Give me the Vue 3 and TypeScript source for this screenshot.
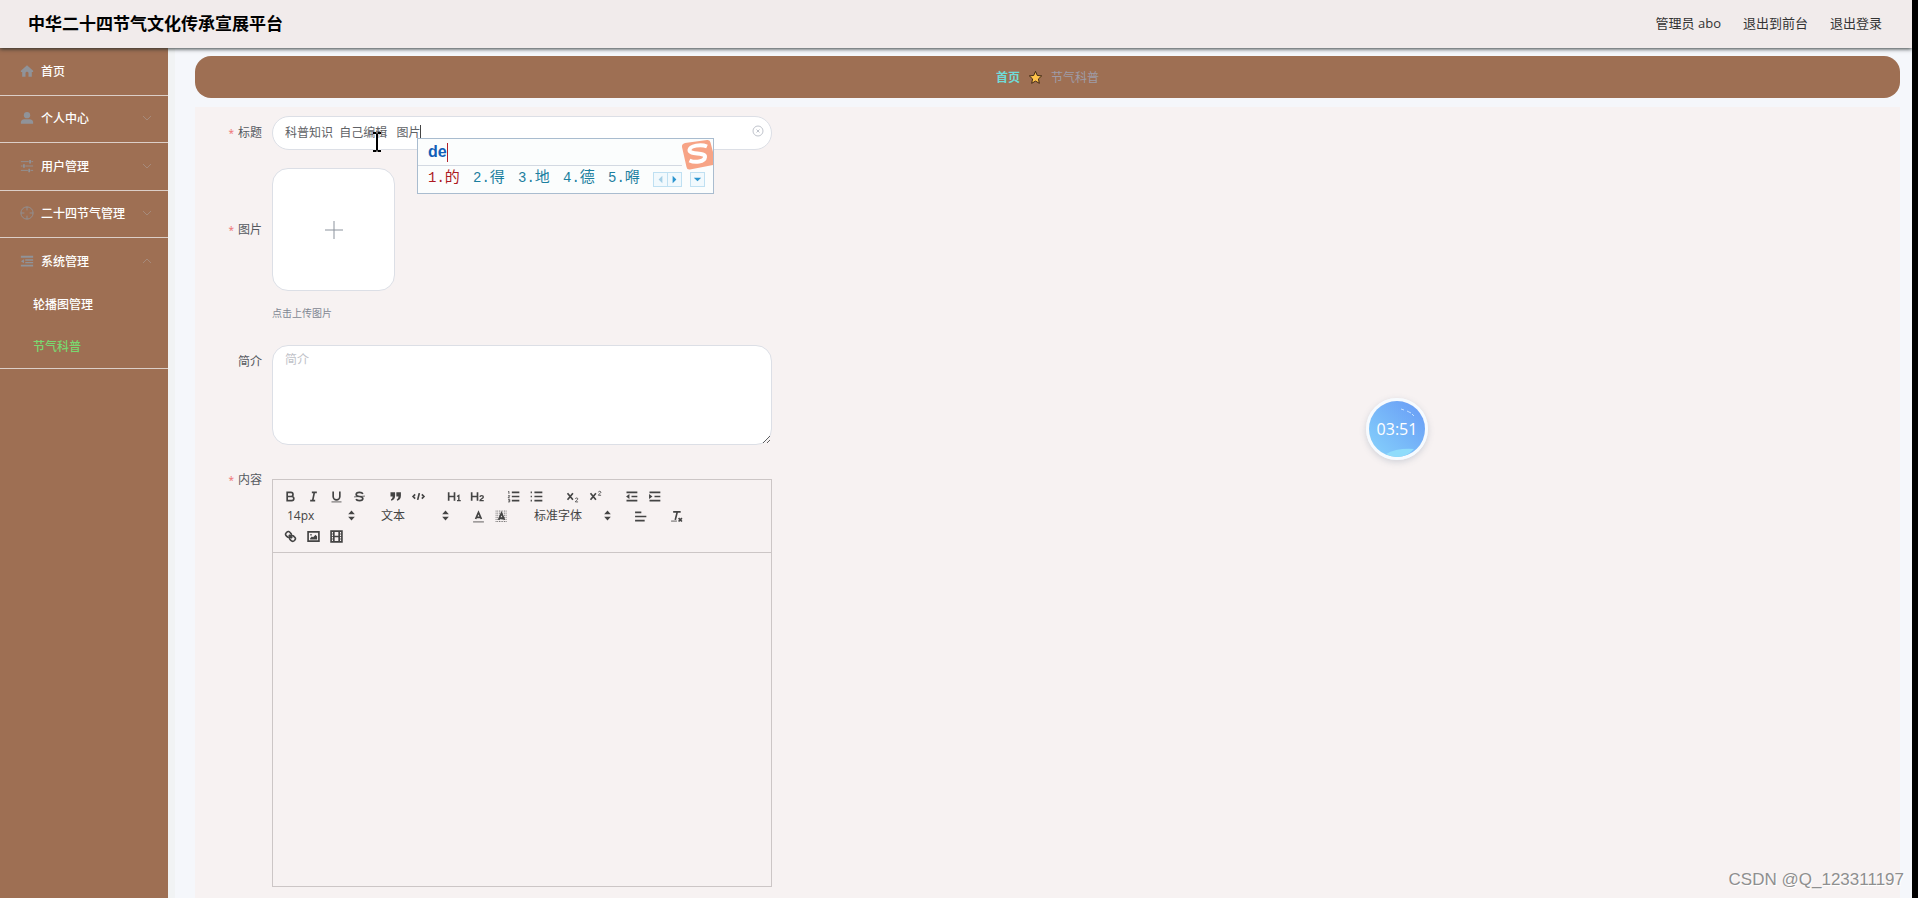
<script setup lang="ts">
import { ref } from 'vue'

interface MenuItem {
  label: string
  icon: string
  expandable: boolean
}

interface Tool {
  name: string
  art: string
}

const menu: MenuItem[] = [
  {
    label: '首页',
    icon: '<path class="solid" d="M8 1.500 1 7.600V9h1.500v5.500H6.300V10.500a1.700 1.700 0 0 1 3.400 0v4h3.800V9H15V7.600z"/>',
    expandable: false,
  },
  {
    label: '个人中心',
    icon: '<circle class="solid" cx="8" cy="4.800" r="3.600"/><path class="solid" d="M1 14.500v-1.800C1 10.600 3 9.400 5 9.400h6c2 0 4 1.200 4 3.300v1.800z"/>',
    expandable: true,
  },
  {
    label: '用户管理',
    icon: '<path class="line" d="M1 3h9M13 3h2M1 8h2M6 8h9M1 13h8M12 13h3"/><path class="line" d="M11.500 1v4M4.500 6v4M10.500 11v4" stroke-width="2"/>',
    expandable: true,
  },
  {
    label: '二十四节气管理',
    icon: '<circle class="line" cx="8" cy="8" r="7"/><path class="line" d="M8 1v4M8 11v4M1 8h4M11 8h4"/>',
    expandable: true,
  },
]

const systemIcon =
  '<path class="solid" d="M1 2h14v2.200H1zM6 6h9v1.700H6zM6 9h9v1.700H6zM1 12.200h14v2H1zM1 8.300 4.500 6v4.700z"/>'

const row1: Tool[][] = [
  [
    { name: '粗体', art: '<path class="s" d="M5 4h4.500a2.500 2.500 0 0 1 0 5H5zM5 9h5.500a2.500 2.500 0 0 1 0 5H5z"/>' },
    { name: '斜体', art: '<path class="s" d="M7 4h6M5 14h6M8 14l2-10"/>' },
    { name: '下划线', art: '<path class="s" d="M5 3v6a4 4 0 0 0 8 0V3"/><path class="t" d="M3 15.500h12"/>' },
    {
      name: '删除线',
      art: '<path class="s" d="M13 6c-.400-1.200-2-2-4-2-2.300 0-4 1-4 2.500S6.500 8.700 9 9s4 .900 4 2.500S11.300 14 9 14c-2 0-3.600-.800-4-2"/><path class="t" d="M15.500 8.500l-13 1"/>',
    },
  ],
  [
    {
      name: '引用',
      art: '<path class="f" d="M3 4h5.500v4c0 3-1.500 5.200-4.500 6l-.500-1.500C4.800 11.800 5.500 10.500 5.600 9H3zM10 4h5.500v4c0 3-1.500 5.200-4.500 6l-.500-1.500c1.300-.700 2-2 2.100-3.500H10z"/>',
    },
    { name: '代码', art: '<path class="s" d="M5 6.500 2.500 9 5 11.500M13 6.500 15.500 9 13 11.500M10 5 8 13"/>' },
  ],
  [
    { name: '一级标题', art: '<path class="s" d="M2 4v10M9 4v10M2 9h7"/><path class="m" d="M12 9l2.200-1.300V14M12 14h4.500"/>' },
    { name: '二级标题', art: '<path class="s" d="M2 4v10M9 4v10M2 9h7"/><path class="m" d="M12 9.500c0-2.200 4-2.200 4 0 0 1.700-4 2.800-4 4.500h4.500"/>' },
  ],
  [
    {
      name: '有序列表',
      art: '<path class="s" d="M7 4h9M7 9h9M7 14h9"/><path class="t" d="M2.500 3.500l1-.700v3M2.500 8h2l-2 2.500h2M2.500 12.500h2v3h-2M3 14h1.500"/>',
    },
    { name: '无序列表', art: '<path class="s" d="M6.500 4H16M6.500 9H16M6.500 14H16M2 4h1.500M2 9h1.500M2 14h1.500"/>' },
  ],
  [
    { name: '下标', art: '<path class="s" d="M3 5l6.500 8M9.500 5 3 13"/><path class="t" d="M12.500 12c0-1.700 3-1.700 3 0 0 1-3 2-3 3.500h3.200"/>' },
    { name: '上标', art: '<path class="s" d="M3 5l6.500 8M9.500 5 3 13"/><path class="t" d="M12.500 4c0-1.700 3-1.700 3 0 0 1-3 2-3 3.500h3.200"/>' },
  ],
  [
    { name: '减少缩进', art: '<path class="s" d="M3 4h13M9 9h7M3 14h13"/><path class="f" d="M6.500 6v6L2.500 9z"/>' },
    { name: '增加缩进', art: '<path class="s" d="M3 4h13M9 9h7M3 14h13"/><path class="f" d="M2.500 6v6l4-3z"/>' },
  ],
]

const colorTools: Tool[] = [
  { name: '文字颜色', art: '<path class="s" d="M5.500 12 9 4l3.500 8M6.500 10h5"/><path class="t" d="M2.500 15.500h13"/>' },
  {
    name: '背景颜色',
    art: '<path class="dots" d="M2 2.500h14M2 5h14M2 7.500h14M2 10h14M2 12.500h14M2 15h14"/><path class="s" d="M5.500 13 9 5l3.500 8M6.500 11h5"/>',
  },
]

const alignTool: Tool = { name: '对齐方式', art: '<path class="s" d="M2.500 4H10M2.500 9H16M2.500 14H14"/>' }
const cleanTool: Tool = {
  name: '清除格式',
  art: '<path class="s" d="M5 3.500h9M7.500 13l2.300-9M11.500 11l4 4M15.500 11l-4 4"/><path class="t" d="M2.500 14.500h7"/>',
}

const row3: Tool[] = [
  {
    name: '链接',
    art: '<path class="s" d="M7 7l4 4M8.900 4.600a3.500 3.500 0 0 1 .400 4.700 3.500 3.500 0 0 1-4.700-.400C3.200 7.500 2 6.400 4.200 4.200s3.300-1 4.700.400zM13.400 9.100a3.500 3.500 0 0 0-4.700-.400 3.500 3.500 0 0 0 .400 4.700c1.400 1.400 2.500 2.500 4.700.400s1-3.300-.400-4.700z"/>',
  },
  {
    name: '图片',
    art: '<path class="s" d="M2.500 3.500h13v11h-13z"/><circle class="f" cx="6" cy="7" r="1"/><path class="f" d="M5 12.500v-1.500l2-2 1.500 1L11.500 7l1.800 2v3.500z"/>',
  },
  {
    name: '视频',
    art: '<path class="s" d="M2.500 2.500h13v13h-13zM5.800 3v12M12.200 3v12M6 9h6"/><path class="t" d="M3 6h2.500M3 9h2.500M3 12h2.500M12.500 6H15M12.500 9H15M12.500 12H15"/>',
  },
]

const title = ref('科普知识  自己编辑   图片')
const intro = ref('')
const size = ref('14px')
const block = ref('文本')
const font = ref('标准字体')
const candidates = ['的', '得', '地', '德', '嘚']
</script>

<template>
  <div class="page">
    <header class="topbar">
      <h1>中华二十四节气文化传承宣展平台</h1>
      <nav class="account">
        <span>管理员 abo</span>
        <a href="#">退出到前台</a>
        <a href="#">退出登录</a>
      </nav>
    </header>

    <div class="body">
      <aside class="sidebar">
        <ul class="menu">
          <li v-for="item in menu" :key="item.label">
            <a href="#" class="entry">
              <svg class="menu-icon" viewBox="0 0 16 16" v-html="item.icon"></svg>
              <span>{{ item.label }}</span>
              <svg v-if="item.expandable" class="chevron" viewBox="0 0 10 10"><path d="M1 3l4 4 4-4" /></svg>
            </a>
          </li>
        </ul>
        <div class="system">
          <a href="#" class="entry">
            <svg class="menu-icon" viewBox="0 0 16 16" v-html="systemIcon"></svg>
            <span>系统管理</span>
            <svg class="chevron" viewBox="0 0 10 10"><path d="M1 7l4-4 4 4" /></svg>
          </a>
          <a href="#" class="sub">轮播图管理</a>
          <a href="#" class="sub active">节气科普</a>
        </div>
      </aside>

      <main class="content">
        <nav class="crumbs">
          <a href="#">首页</a>
          <svg class="star" viewBox="0 0 16 16">
            <path d="M8 1.500l1.900 4.300 4.700.500-3.500 3.200 1 4.700L8 11.800l-4.100 2.400 1-4.700L1.400 6.300l4.700-.500z" />
          </svg>
          <span>节气科普</span>
        </nav>

        <form class="panel" @submit.prevent>
          <div class="row">
            <label class="label required" for="title">标题</label>
            <div class="field">
              <input id="title" v-model="title" class="text" type="text" />
              <button class="clear" type="button" aria-label="清空">
                <svg viewBox="0 0 12 12"><circle cx="6" cy="6" r="5" /><path d="M4.500 4.500l3 3M7.500 4.500l-3 3" /></svg>
              </button>
              <i class="caret"></i>
              <div class="ime">
                <div class="ime-top"><b>de</b><i></i></div>
                <div class="ime-list">
                  <span v-for="(c, i) in candidates" :key="c" :class="{ first: i === 0 }"><small>{{ i + 1 }}.</small>{{ c }}</span>
                  <div class="pager">
                    <button type="button" aria-label="上一页"><svg viewBox="0 0 14 14"><path class="dim" d="M9 3v8L5 7z" /></svg></button>
                    <button type="button" aria-label="下一页"><svg viewBox="0 0 14 14"><path d="M5 3v8l4-4z" /></svg></button>
                  </div>
                  <button class="more" type="button" aria-label="更多"><svg viewBox="0 0 14 14"><path d="M3 5h8L7 9z" /></svg></button>
                </div>
                <svg class="sogou" viewBox="0 0 32 32">
                  <path class="tile" d="M4 4 26 1q3-.500 3.500 2.500L32 13v13l-23 4.500q-3 .500-3.500-2.500L1 8q-.500-3 3-4z" />
                  <path class="curve" d="M26 7.500C20 5 9 6.500 8.500 11c-.500 5 16 2 15.500 7-.500 5-10 6-15.500 3.500" />
                </svg>
              </div>
              <svg class="ibeam" viewBox="0 0 10 20"><path class="halo" d="M1 1h3.500M5.500 1H9M5 1.500v17M1 19h3.500M5.500 19H9" /><path d="M1 1h3.500M5.500 1H9M5 1.500v17M1 19h3.500M5.500 19H9" /></svg>
            </div>
          </div>

          <div class="row">
            <label class="label tall required" for="upload">图片</label>
            <div class="field">
              <button id="upload" class="upload" type="button" aria-label="上传图片">
                <svg viewBox="0 0 20 20"><path d="M10 1v18M1 10h18" /></svg>
              </button>
              <p class="tip">点击上传图片</p>
            </div>
          </div>

          <div class="row">
            <label class="label" for="intro">简介</label>
            <div class="field"><textarea id="intro" v-model="intro" placeholder="简介"></textarea></div>
          </div>

          <div class="row">
            <span id="body-label" class="label required">内容</span>
            <div class="field editor">
              <div class="toolbar">
                <div class="tools">
                  <div v-for="(group, g) in row1" :key="g" class="group">
                    <button v-for="t in group" :key="t.name" type="button" :aria-label="t.name"><svg viewBox="0 0 18 18" v-html="t.art"></svg></button>
                  </div>
                </div>
                <div class="tools">
                  <div class="picker">
                    <select v-model="size" aria-label="字号"><option>14px</option></select>
                    <svg viewBox="0 0 18 18"><path d="M5 10.500h8L9 15zM5 7.500h8L9 3z" /></svg>
                  </div>
                  <div class="picker">
                    <select v-model="block" aria-label="段落"><option>文本</option></select>
                    <svg viewBox="0 0 18 18"><path d="M5 10.500h8L9 15zM5 7.500h8L9 3z" /></svg>
                  </div>
                  <div class="group">
                    <button v-for="t in colorTools" :key="t.name" type="button" :aria-label="t.name"><svg viewBox="0 0 18 18" v-html="t.art"></svg></button>
                  </div>
                  <div class="picker wide">
                    <select v-model="font" aria-label="字体"><option>标准字体</option></select>
                    <svg viewBox="0 0 18 18"><path d="M5 10.500h8L9 15zM5 7.500h8L9 3z" /></svg>
                  </div>
                  <button type="button" :aria-label="alignTool.name"><svg viewBox="0 0 18 18" v-html="alignTool.art"></svg></button>
                  <button type="button" :aria-label="cleanTool.name"><svg viewBox="0 0 18 18" v-html="cleanTool.art"></svg></button>
                </div>
                <div class="tools">
                  <div class="group">
                    <button v-for="t in row3" :key="t.name" type="button" :aria-label="t.name"><svg viewBox="0 0 18 18" v-html="t.art"></svg></button>
                  </div>
                </div>
              </div>
              <div class="canvas" contenteditable="true" role="textbox" aria-labelledby="body-label"></div>
            </div>
          </div>
        </form>
      </main>
    </div>

    <div class="timer">
      <svg viewBox="0 0 56 56">
        <defs>
          <linearGradient id="sky" x1="0.1" y1="0.9" x2="0.9" y2="0.1">
            <stop offset="0" stop-color="#83cdfb" />
            <stop offset="1" stop-color="#6a9ff6" />
          </linearGradient>
        </defs>
        <circle cx="28" cy="28" r="28" fill="url(#sky)" />
        <path d="M17 53q10-6 28-5-7 8-17 8-6 0-11-3z" fill="#8fdcfb" />
        <path d="M32 8l3 1M38 10l4 2M43 13l2 2" stroke="#c3e0ff" fill="none" />
      </svg>
      <span>03:51</span>
    </div>
    <div class="mark">CSDN @Q_123311197</div>
  </div>
</template>

<style>
body {
  margin: 0;
  overflow: hidden;
}
</style>

<style scoped>
.page {
  position: relative;
  box-sizing: border-box;
  display: flex;
  flex-direction: column;
  height: 100vh;
  overflow: hidden;
  border-right: 6px solid #000;
  background: #f5f7fb;
  color: #555960;
  font: 12px "Open Sans", "Noto Sans CJK SC", sans-serif;
}

.page * {
  box-sizing: border-box;
}

a {
  color: inherit;
  text-decoration: none;
}

button {
  padding: 0;
  border: 0;
  background: none;
  color: inherit;
  cursor: pointer;
}

svg {
  display: block;
}

.topbar {
  position: relative;
  z-index: 1;
  display: flex;
  flex: none;
  align-items: center;
  justify-content: space-between;
  height: 48px;
  padding: 0 30px 0 28px;
  background: #f1ebeb;
  box-shadow: 0 1px 4px rgba(30, 40, 40, 0.9);
}

h1 {
  margin: 0;
  color: #000;
  font-size: 17px;
  line-height: 24px;
}

.account {
  display: flex;
  gap: 22px;
  padding-bottom: 2px;
  color: #333;
  font-size: 13px;
  line-height: 24px;
}

.body {
  display: flex;
  flex: 1;
  min-height: 0;
}

.sidebar {
  flex: none;
  width: 168px;
  background: #9e6f53;
  color: #fff;
  font-weight: 500;
}

.menu {
  display: grid;
  grid-template-rows: repeat(4, 1fr);
  height: 190px;
  margin: 0;
  padding: 0;
  list-style: none;
}

.menu li,
.system {
  border-bottom: 1px solid #dccfc8;
}

.entry {
  display: flex;
  align-items: center;
  gap: 7px;
  height: 46px;
  padding: 0 16px 0 20px;
}

.menu .entry {
  height: 45px;
}

.menu-icon {
  width: 14px;
  height: 14px;
}

.menu-icon :deep(.solid) {
  fill: #909399;
}

.menu-icon :deep(.line) {
  fill: none;
  stroke: #909399;
}

.chevron {
  width: 10px;
  height: 10px;
  margin-left: auto;
}

.chevron path {
  fill: none;
  stroke: #a68a7b;
}

.sub {
  display: block;
  padding-left: 33px;
  line-height: 42px;
}

.active {
  color: #79d970;
}

.content {
  display: flex;
  flex: 1;
  flex-direction: column;
  gap: 9px;
  min-width: 0;
  padding: 8px 12px 0 20px;
  border-left: 7px solid #f1f3f4;
}

.crumbs {
  display: flex;
  flex: none;
  align-items: center;
  justify-content: center;
  gap: 8px;
  height: 42px;
  border-radius: 16px;
  background: #9e6f53;
  color: #9f9ca6;
}

.crumbs a {
  color: #70dcd8;
  font-weight: 700;
}

.star {
  width: 15px;
  height: 15px;
}

.star path {
  fill: #ffc34a;
  stroke: #3a2413;
}

.panel {
  display: flex;
  flex: 1;
  flex-direction: column;
  gap: 18px;
  min-height: 0;
  padding-top: 9px;
  background: #f7f2f2;
}

.row {
  display: flex;
}

.label {
  flex: none;
  width: 77px;
  padding-right: 10px;
  line-height: 33px;
  text-align: right;
}

.tall {
  line-height: 123px;
}

.required::before {
  margin-right: 4px;
  color: #ee6e6e;
  font-size: 10px;
  content: "*";
}

.field {
  position: relative;
  width: 500px;
}

.text,
textarea {
  display: block;
  width: 100%;
  border: 1px solid #dcdfe6;
  outline: 0;
  background: #fff;
  color: #606266;
  font: inherit;
}

.text {
  height: 34px;
  padding: 0 30px 2px 12px;
  border-radius: 17px;
}

textarea {
  height: 100px;
  padding: 5px 12px;
  border-radius: 16px;
  line-height: 18px;
  resize: both;
}

textarea::placeholder {
  color: #bfc2c8;
}

.clear {
  position: absolute;
  top: 9px;
  right: 8px;
}

.clear svg {
  width: 12px;
  height: 12px;
  fill: none;
  stroke: #c0c4cc;
}

.caret {
  position: absolute;
  top: 9px;
  left: 148px;
  width: 1px;
  height: 14px;
  background: #444;
}

.ibeam {
  position: absolute;
  top: 16px;
  left: 100px;
  width: 10px;
  height: 20px;
  fill: none;
  stroke: #000;
  stroke-width: 2;
}

.ibeam .halo {
  stroke: #fff;
  stroke-width: 3;
}

.ime {
  position: absolute;
  z-index: 2;
  top: 22px;
  left: 145px;
  width: 297px;
  height: 56px;
  border: 1px solid #a9bccf;
  background: #fbfdfd;
}

.ime-top {
  display: flex;
  align-items: center;
  height: 27px;
  margin-right: 31px;
  padding-left: 10px;
  border-bottom: 1px solid #d3d9e2;
  color: #125fb8;
  font: 16px "Liberation Sans", sans-serif;
}

.ime-top i {
  width: 1px;
  height: 19px;
  background: #b3202a;
}

.ime-list {
  display: flex;
  align-items: center;
  height: 27px;
  padding-left: 10px;
  color: #1b7f9f;
  font: 15px/24px "Liberation Mono", "Noto Sans CJK SC", monospace;
}

.ime-list span {
  width: 45px;
  padding-bottom: 2px;
  white-space: nowrap;
}

.ime-list .first {
  color: #ad1a22;
}

small {
  font-size: 14px;
}

.pager {
  display: flex;
  margin-right: 8px;
}

.pager button,
.more {
  width: 15px;
  height: 15px;
  border: 1px solid #bfe0f2;
  background: #f1f9fd;
}

.pager button + button {
  margin-left: -1px;
}

.pager svg,
.more svg {
  width: 13px;
  height: 13px;
  fill: #2b95cf;
}

.pager .dim {
  fill: #a4cfe6;
}

.sogou {
  position: absolute;
  top: 0;
  right: 0;
  width: 32px;
  height: 32px;
}

.tile {
  fill: #f7a486;
}

.curve {
  fill: none;
  stroke: #fff;
  stroke-width: 4;
}

.upload {
  display: flex;
  align-items: center;
  justify-content: center;
  width: 123px;
  height: 123px;
  border: 1px solid #dcdfe6;
  border-radius: 16px;
  background: #fff;
}

.upload svg {
  width: 20px;
  height: 20px;
  fill: none;
  stroke: #8c939d;
}

.tip {
  margin: 14px 0 6px;
  color: #7f8793;
  font-size: 10px;
  line-height: 16px;
}

.editor {
  margin-top: 16px;
  border: 1px solid #ccc6c6;
  color: #444;
}

.toolbar {
  padding: 6px;
  border-bottom: 1px solid #ccc6c6;
}

.tools {
  display: flex;
  gap: 13px;
  height: 20px;
}

.group {
  display: flex;
}

.tools button {
  display: flex;
  align-items: center;
  justify-content: center;
  width: 23px;
  height: 20px;
}

.tools svg {
  width: 15px;
  height: 15px;
}

.tools :deep(.s),
.tools :deep(.m),
.tools :deep(.t),
.tools :deep(.dots) {
  fill: none;
  stroke: #444;
  stroke-width: 2;
}

.tools :deep(.m) {
  stroke-width: 1.6;
}

.tools :deep(.t) {
  stroke-width: 1;
}

.tools :deep(.dots) {
  stroke-width: 1;
  stroke-dasharray: 1 1;
}

.tools :deep(.f) {
  fill: #444;
}

.picker {
  position: relative;
  width: 81px;
}

.wide {
  width: 90px;
}

.picker select {
  width: 100%;
  height: 20px;
  padding: 0 0 1px 8px;
  border: 0;
  appearance: none;
  background: none;
  color: #444;
  font: inherit;
}

.picker svg {
  position: absolute;
  top: 2px;
  right: 1px;
  fill: #444;
  pointer-events: none;
}

.canvas {
  height: 333px;
  outline: 0;
}

.timer {
  position: absolute;
  top: 398px;
  right: 484px;
  display: grid;
  place-items: center;
  width: 62px;
  height: 62px;
  border: 3px solid #f6fbff;
  border-radius: 50%;
  box-shadow: 0 2px 6px rgba(90, 110, 140, 0.25);
  color: #fff;
  font-size: 16px;
}

.timer svg,
.timer span {
  grid-area: 1 / 1;
}

.timer svg {
  width: 56px;
  height: 56px;
}

.mark {
  position: absolute;
  right: 8px;
  bottom: 8px;
  color: #8f8f8f;
  font: 17px/20px "Liberation Sans", sans-serif;
  text-shadow: 1px 1px 0 #fff;
}
</style>
